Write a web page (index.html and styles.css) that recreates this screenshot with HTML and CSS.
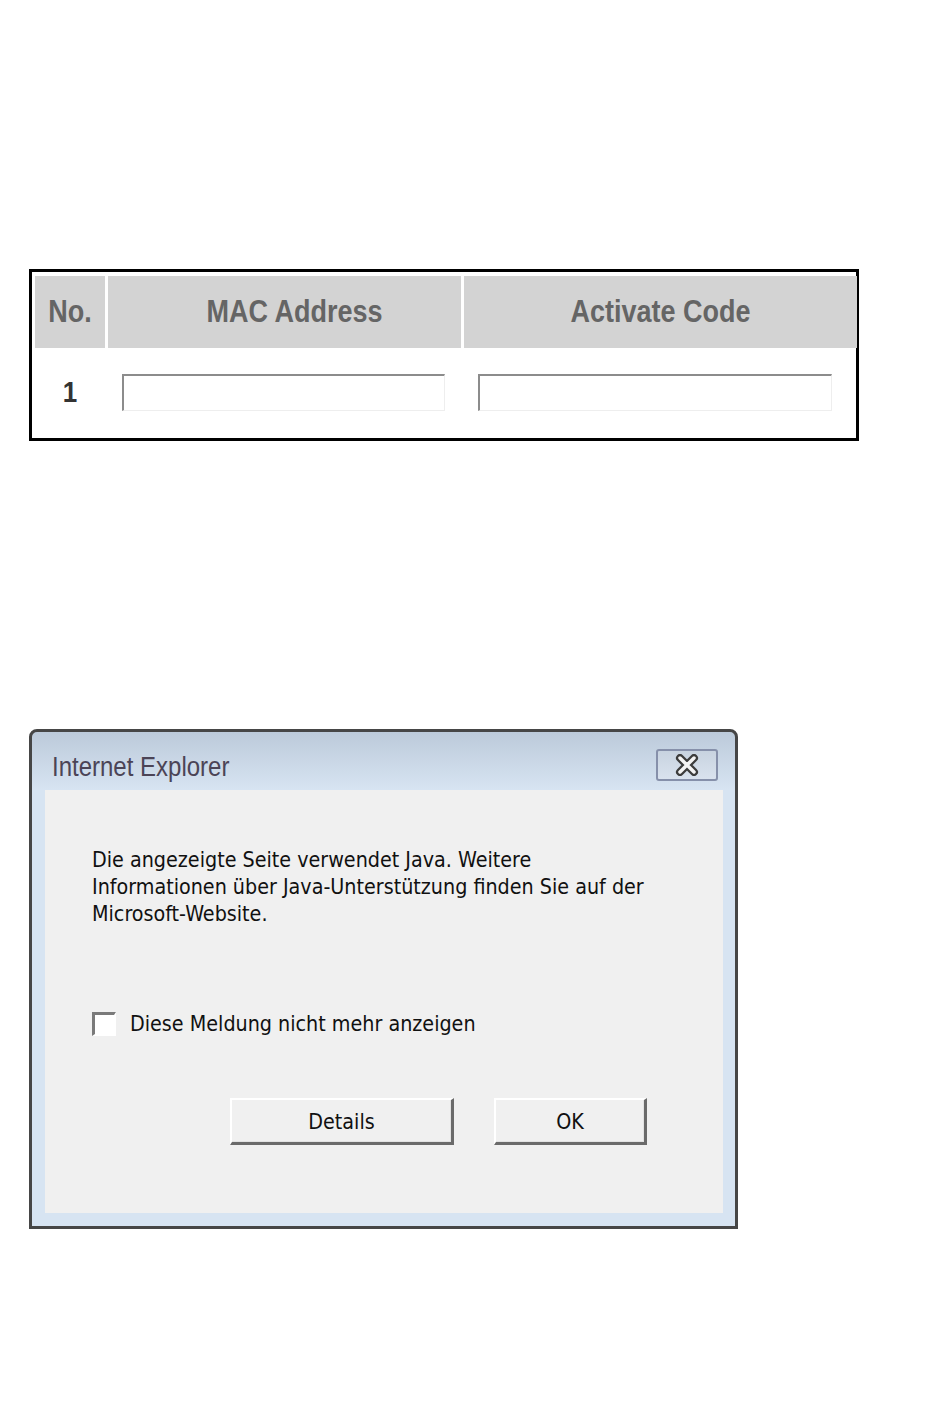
FILE: index.html
```html
<!DOCTYPE html>
<html lang="de">
  <head>
    <meta charset="UTF-8" />
    <title>Activate Code</title>
    <link rel="stylesheet" href="styles.css">
  </head>
  <body class="body">
    <div class="code__box">
      <div class="code__grid">
        <div class="code__head"><span class="stretch">No.</span></div>
        <div class="code__head code__head_mac"><span class="stretch">MAC Address</span></div>
        <div class="code__head"><span class="stretch">Activate Code</span></div>
        <div class="code__cell code__num"><span class="stretch">1</span></div>
        <div class="code__cell"><input type="text" class="code__input code__input_mac" /></div>
        <div class="code__cell"><input type="text" class="code__input code__input_act" /></div>
      </div>
    </div>

    <div class="dialog">
      <div class="dialog__title">
        <span class="dialog__caption">Internet Explorer</span>
        <div class="dialog__close">
          <svg width="30" height="22" viewBox="0 0 30 22">
            <path d="M8 4 L22 18 M22 4 L8 18" stroke="#3c3c3c" stroke-width="8" stroke-linecap="round" />
            <path d="M8 4 L22 18 M22 4 L8 18" stroke="#f4f4f4" stroke-width="3.5" stroke-linecap="round" />
          </svg>
        </div>
      </div>
      <div class="dialog__panel">
        <p class="dialog__text">
          Die angezeigte Seite verwendet Java. Weitere<br />
          Informationen über Java-Unterstützung finden Sie auf der<br />
          Microsoft-Website.
        </p>
        <label class="dialog__check">
          <span class="check__box"></span>
          <span class="check__label">Diese Meldung nicht mehr anzeigen</span>
        </label>
        <div class="dialog__buttons">
          <button class="win__button win__button_wide">Details</button>
          <button class="win__button">OK</button>
        </div>
      </div>
    </div>
  </body>
</html>
```

FILE: styles.css
```css
.body {
  margin: 0;
  background-color: #fff;
  padding-top: 269px;
  padding-left: 29px;
  height: 1414px;
  box-sizing: border-box;
}
.code__box {
  width: 830px;
  box-sizing: border-box;
  border: 3px solid #000;
  padding: 4px 2px 2px 3px;
}
.code__grid {
  display: grid;
  grid-template-columns: 70px 353px 393px;
  column-gap: 3px;
}
.code__head {
  height: 72px;
  background-color: #d3d3d3;
  display: flex;
  align-items: center;
  justify-content: center;
  font-family: "Liberation Sans", Arial, sans-serif;
  font-weight: bold;
  font-size: 27px;
  color: #656565;
}
.code__head_mac {
  padding-left: 20px;
}
.stretch {
  display: inline-block;
  transform: scaleY(1.17);
}
.code__cell {
  height: 88px;
  display: flex;
  align-items: center;
  padding-left: 14px;
}
.code__num {
  justify-content: center;
  padding-left: 0;
  font-family: "Liberation Sans", Arial, sans-serif;
  font-weight: bold;
  font-size: 26px;
  color: #333;
}
.code__input {
  height: 37px;
  box-sizing: border-box;
  border-top: 2px solid #8c8c8c;
  border-left: 2px solid #8c8c8c;
  border-right: 1px solid #eee;
  border-bottom: 1px solid #eee;
  background-color: #fff;
  margin: 0;
  padding: 0;
}
.code__input_mac {
  width: 323px;
}
.code__input_act {
  width: 354px;
}

.dialog {
  margin-top: 288px;
  width: 709px;
  height: 500px;
  box-sizing: border-box;
  border: 3px solid #464646;
  border-radius: 8px 8px 0 0;
  background: linear-gradient(#bccada, #d7e4f2 58px, #d7e4f2);
  padding: 0 12px 13px 13px;
  display: flex;
  flex-direction: column;
}
.dialog__title {
  height: 58px;
  display: flex;
  align-items: flex-start;
  justify-content: space-between;
}
.dialog__caption {
  margin-top: 21px;
  margin-left: 7px;
  font-family: "Liberation Sans", Arial, sans-serif;
  font-size: 24px;
  color: #4b4456;
  display: inline-block;
  transform: scaleY(1.15);
}
.dialog__close {
  margin-top: 17px;
  margin-right: 5px;
  width: 62px;
  height: 32px;
  box-sizing: border-box;
  border: 2px solid #8690aa;
  border-radius: 3px;
  background: linear-gradient(#c8d3e0, #d9e2ee);
  display: flex;
  align-items: center;
  justify-content: center;
}
.dialog__panel {
  flex: 1;
  background-color: #f0f0f0;
  padding-left: 47px;
  display: flex;
  flex-direction: column;
}
.dialog__text,
.check__label,
.win__button {
  font-family: "DejaVu Sans Condensed", Arial, sans-serif;
  font-size: 21.3px;
  color: #111;
}
.dialog__text {
  margin: 56px 0 0 0;
  line-height: 27px;
}
.dialog__check {
  margin-top: 84px;
  display: flex;
  align-items: center;
}
.check__box {
  width: 24px;
  height: 24px;
  box-sizing: border-box;
  border-top: 3px solid #7a7a7a;
  border-left: 3px solid #7a7a7a;
  border-right: 2px solid #fff;
  border-bottom: 2px solid #fff;
  background-color: #fff;
  margin-right: 14px;
}
.dialog__buttons {
  margin-top: 62px;
  margin-left: 138px;
  display: flex;
  gap: 40px;
}
.win__button {
  width: 153px;
  height: 47px;
  box-sizing: border-box;
  background-color: #f0f0f0;
  border-top: 2px solid #fff;
  border-left: 2px solid #fff;
  border-right: 3px solid #6a6a6a;
  border-bottom: 3px solid #6a6a6a;
  box-shadow: inset -1px -1px 0 #e2e2e2;
  padding: 0;
}
.win__button_wide {
  width: 224px;
}
```
